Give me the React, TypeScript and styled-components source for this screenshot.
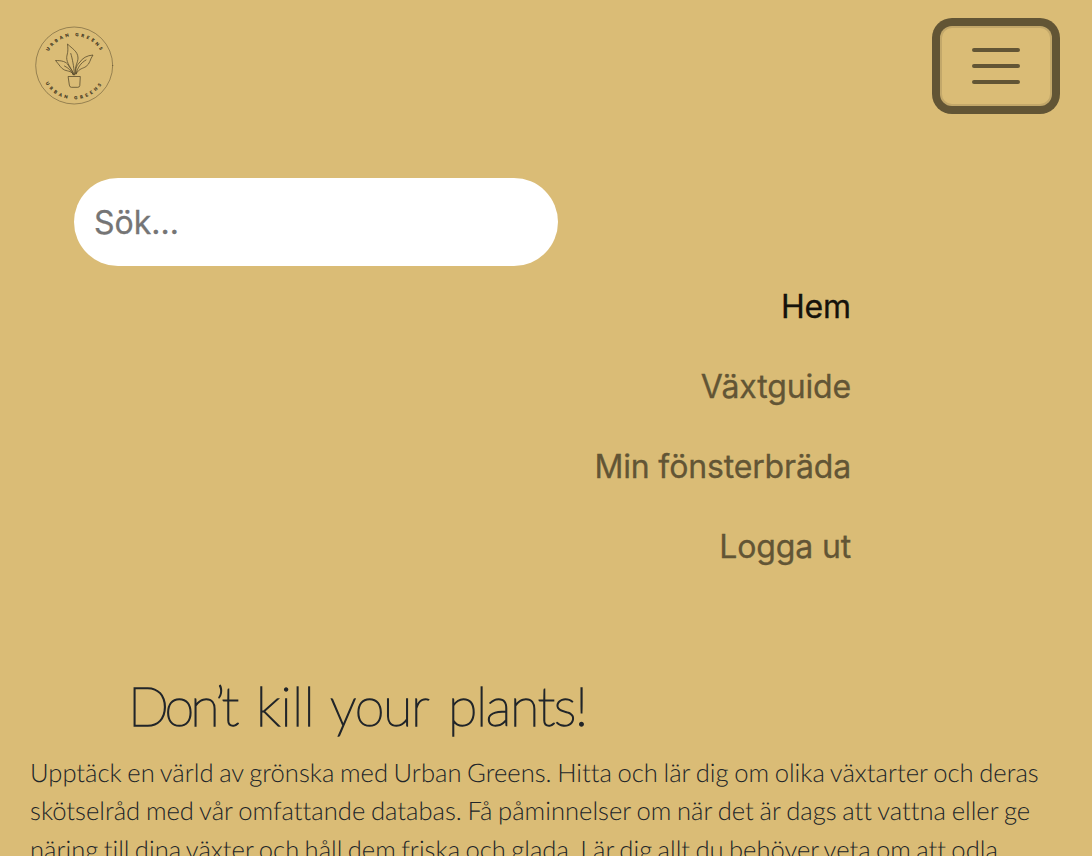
import React from "react";
import styled, { createGlobalStyle } from "styled-components";

const GlobalStyle = createGlobalStyle`
  *, *::before, *::after { box-sizing: border-box; }
  html, body { margin: 0; height: 100%; overflow: hidden; background: #dabc76; }
`;

const Page = styled.div`
  height: 100vh;
  overflow: hidden;
  background: #dabc76;
  color: #212529;
  font-family: Inter, "Liberation Sans", sans-serif;
`;
const Navbar = styled.header`
  display: flex;
  justify-content: space-between;
  align-items: center;
  height: 132px;
  padding: 0 40px 0 34px;
`;
const Logo = styled.svg`
  display: block;
  width: 80px;
  height: 80px;
`;
const Toggler = styled.button`
  display: flex;
  align-items: center;
  justify-content: center;
  width: 112px;
  height: 80px;
  padding: 0;
  background: transparent;
  border: 2px solid rgba(0, 0, 0, 0.1);
  border-radius: 12px;
  box-shadow: 0 0 0 8px #625535;
`;
const SearchForm = styled.form`
  margin: 0;
  padding: 46px 0 0 74px;
`;
const SearchInput = styled.input`
  display: block;
  width: 484px;
  height: 88px;
  padding: 0 20px;
  border: 0;
  border-radius: 44px;
  background: #fff;
  font: 400 32px Inter, "Liberation Sans", sans-serif;
  &::placeholder { color: #757575; opacity: 1; -webkit-text-stroke: 0.3px #757575; }
`;
const Menu = styled.nav`
  display: flex;
  flex-direction: column;
  align-items: flex-end;
  width: 851px;
  padding-top: 1px;
`;
const MenuLink = styled.a<{ $active?: boolean }>`
  height: 80px;
  line-height: 80px;
  font-size: 32px;
  letter-spacing: -0.15px;
  -webkit-text-stroke: 0.3px;
  color: ${(p) => (p.$active ? "#15120b" : "#625535")};
`;
const Intro = styled.main`
  padding: 79px 0 0 30px;
`;
const Title = styled.h1`
  display: flex;
  margin: 0;
  padding-left: 98px;
  height: 88px;
  font: 100 54px/80px Lato, sans-serif;
  -webkit-text-stroke: 1.4px #212529;
`;
const Word = styled.span<{ $width: number; $spacing: number }>`
  width: ${(p) => p.$width}px;
  white-space: nowrap;
  letter-spacing: ${(p) => p.$spacing}px;
`;
const Text = styled.p`
  margin: 0;
  white-space: nowrap;
  font: 300 25.6px/38.4px Lato, sans-serif;
  font-variant-ligatures: none;
  text-rendering: geometricPrecision;
`;
const Line = styled.span<{ $gap: number }>`
  display: block;
  word-spacing: ${(p) => p.$gap}px;
`;

const App = () => (
  <Page>
    <GlobalStyle />
    <Navbar>
      <Logo viewBox="0 0 80 80" fill="none" stroke="#51452a" strokeLinecap="round" strokeLinejoin="round">
        <defs>
          <path id="upper" d="M13.5 27.5 A30 30 0 0 1 68 27.5" />
          <path id="lower" d="M10 54 A33 33 0 0 0 70 54" />
        </defs>
        <circle cx="40.2" cy="39.5" r="38.5" strokeWidth="0.5" />
        <g fill="#3b321e" stroke="#3b321e" strokeWidth="0.15" fontFamily="Lato, sans-serif" fontSize="4.3" fontWeight="900">
          <text><textPath href="#upper" startOffset="2.5" textLength="62">URBAN GREENS</textPath></text>
          <text><textPath href="#lower" startOffset="3.5" textLength="66">URBAN GREENS</textPath></text>
        </g>
        <g strokeWidth="0.75">
          <path d="M34.500 50.5h11.800l-.5 9q-.2 1.800-2 1.800h-6.400q-1.800 0-2-1.800z" />
          <path d="M40.500 49C37 42 32.500 37 32.700 31.500c.2-3.500 1.900-5 .8-13.500 4.500 4.500 10.500 7.500 10.500 14 0 5-3.500 7.500-2.700 16" />
          <path d="M36.800 27.500c1.800 6 2.800 12 3.700 21" />
          <path d="M42 48c-1-6 1-9 4-12 2.500-4 7-6.500 13-7-3 4-3 9-7 11.500-3 2.200-6.500 1.500-10 7.500 1.500-6 4.500-11 10-14" />
          <path d="M39.500 49c-1.500-4-5-3.500-9-5-3.500-1.500-5-5-9-9.500 6 0 11 1 13 5 1.500 3 3.500 4 5 9.500-2.500-4.500-5-7-9-9" />
        </g>
      </Logo>
      <Toggler aria-label="Meny">
        <svg width="60" height="60" viewBox="0 0 60 60">
          <path d="M8 14h44M8 30h44M8 46h44" stroke="#625535" strokeWidth="4" strokeLinecap="round" />
        </svg>
      </Toggler>
    </Navbar>
    <SearchForm>
      <SearchInput placeholder="Sök..." />
    </SearchForm>
    <Menu>
      <MenuLink $active>Hem</MenuLink>
      <MenuLink>Växtguide</MenuLink>
      <MenuLink>Min fönsterbräda</MenuLink>
      <MenuLink>Logga ut</MenuLink>
    </Menu>
    <Intro>
      <Title>
        <Word $width={128} $spacing={-4}>Don’t</Word>
        <Word $width={74} $spacing={0.3}>kill</Word>
        <Word $width={118} $spacing={-1.3}>your</Word>
        <Word $width={150} $spacing={-1.4}>plants!</Word>
      </Title>
      <Text>
        <Line $gap={-1.35}>Upptäck en värld av grönska med Urban Greens. Hitta och lär dig om olika växtarter och deras</Line>
        <Line $gap={-1.25}>skötselråd med vår omfattande databas. Få påminnelser om när det är dags att vattna eller ge</Line>
        <Line $gap={-1.58}>näring till dina växter och håll dem friska och glada. Lär dig allt du behöver veta om att odla</Line>
      </Text>
    </Intro>
  </Page>
);

export default App;
